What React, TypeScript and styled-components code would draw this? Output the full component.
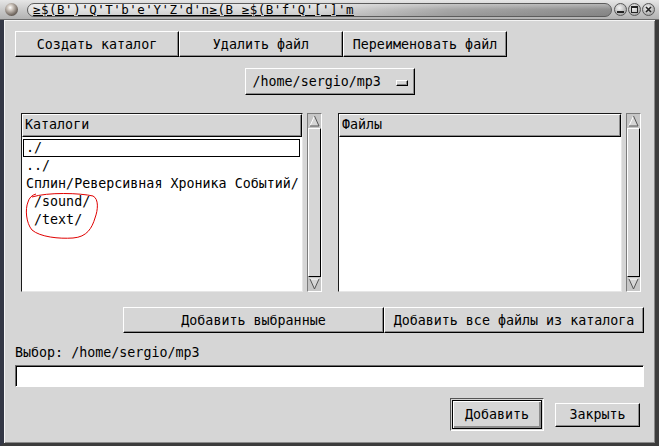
import React from 'react';
import styled, { createGlobalStyle } from 'styled-components';

const MONO = `"DejaVu Sans Mono", "Liberation Mono", monospace`;

const GlobalStyle = createGlobalStyle`
  html, body {
    margin: 0;
    padding: 0;
    background: #d6d6d6;
  }
  body {
    width: 659px;
    height: 446px;
    overflow: hidden;
  }
`;

const Window = styled.div`
  width: 659px;
  height: 446px;
  display: flex;
  flex-direction: column;
  background: #d6d6d6;
  font-family: ${MONO};
  font-size: 13.33px;
  color: #000;
`;

const TitleBar = styled.div`
  height: 20px;
  flex: none;
  box-sizing: border-box;
  display: flex;
  align-items: center;
  padding: 0 4px 0 5px;
  background: linear-gradient(#e6e6e6, #c8c8c8 55%, #b2b2b2);
  border-bottom: 1px solid #6c6c6c;
`;

const Sphere = styled.div`
  width: 13px;
  height: 13px;
  flex: none;
  border-radius: 50%;
  margin-right: 9px;
  background: radial-gradient(circle at 40% 35%, #ffffff 0, #d4ccc4 22%, #7a7068 62%, #2a2622 100%);
`;

const TitlePill = styled.div`
  flex: 1;
  height: 14px;
  box-sizing: border-box;
  border: 1px solid #5c5c5c;
  border-radius: 8px;
  padding-left: 5px;
  display: flex;
  align-items: center;
  background:
    linear-gradient(rgba(255, 255, 255, 0.35), rgba(255, 255, 255, 0) 45%, rgba(0, 0, 0, 0.08)),
    linear-gradient(to right, #e4e4e4 0%, #dadada 50%, #a8a8a8 72%, #8e8e8e 100%);
  overflow: hidden;
`;

const TitleText = styled.span`
  font-size: 12.5px;
  letter-spacing: 0.5px;
  text-decoration: underline;
  white-space: pre;
  line-height: 12px;
`;

const TitleButtons = styled.div`
  display: flex;
  gap: 1px;
  margin-left: 2px;
`;

const TitleBtn = styled.div`
  width: 13px;
  height: 13px;
  box-sizing: border-box;
  border-radius: 50%;
  border: 1px solid #585858;
  background: radial-gradient(circle at 40% 35%, #f4f4f4 0, #bdbdbd 55%, #8a8a8a 100%);
  display: flex;
  align-items: center;
  justify-content: center;
`;

const Frame = styled.div`
  flex: 1;
  display: flex;
  flex-direction: column;
  border-left: 4px solid #343846;
  border-right: 4px solid #3c3c3c;
  border-bottom: 3px solid #3c3c3c;
  box-shadow: inset 1px 1px 0 #f4f4f4, inset -1px -1px 0 #8a8a8a;
  padding: 11px 11px 0 11px;
`;

const Button = styled.button<{ $w: number; $h: number; $default?: boolean }>`
  width: ${(p) => p.$w}px;
  height: ${(p) => p.$h}px;
  flex: none;
  box-sizing: border-box;
  padding: 0;
  margin: 0;
  font-family: ${MONO};
  font-size: 13.33px;
  color: #000;
  background: #d6d6d6;
  border: 1px solid;
  border-color: ${(p) => (p.$default ? '#000' : '#fff #000 #000 #fff')};
  box-shadow: ${(p) =>
    p.$default
      ? 'inset 1px 1px 0 #fff, inset -2px -2px 0 #8c8c8c'
      : 'inset -1px -1px 0 #8c8c8c'};
  text-align: center;
  white-space: pre;
`;

const TopRow = styled.div`
  display: flex;
`;

const OptionMenu = styled.div`
  align-self: center;
  margin-top: 11px;
  width: 170px;
  height: 27px;
  box-sizing: border-box;
  display: flex;
  align-items: center;
  justify-content: space-between;
  padding: 0 6px 0 7px;
  border: 1px solid;
  border-color: #fff #000 #000 #fff;
  box-shadow: inset -1px -1px 0 #8c8c8c;
`;

const Indicator = styled.div`
  width: 12px;
  height: 6px;
  box-sizing: border-box;
  margin-top: 3px;
  border: 1px solid;
  border-color: #fff #000 #000 #fff;
  box-shadow: inset -1px -1px 0 #8c8c8c;
`;

const ListsRow = styled.div`
  margin-top: 18px;
  height: 179px;
  display: flex;
  gap: 16px;
  padding-left: 6px;
`;

const ListGroup = styled.div`
  display: flex;
  gap: 4px;
`;

const Panel = styled.div<{ $w: number }>`
  position: relative;
  width: ${(p) => p.$w}px;
  box-sizing: border-box;
  display: flex;
  flex-direction: column;
  border: 1px solid;
  border-color: #1a1a1a #e6e6e6 #e6e6e6 #1a1a1a;
  background: #fff;
`;

const Header = styled.div`
  height: 23px;
  flex: none;
  box-sizing: border-box;
  padding-left: 2px;
  line-height: 20px;
  background: #d6d6d6;
  border: 1px solid;
  border-color: #fff #000 #000 #fff;
  box-shadow: inset -1px -1px 0 #8c8c8c;
`;

const ListBody = styled.div`
  flex: 1;
  padding-top: 2px;
  background: #fff;
`;

const Row = styled.div<{ $focus?: boolean }>`
  height: 18px;
  box-sizing: border-box;
  margin: 0 2px 0 1px;
  padding-left: 2px;
  line-height: 16px;
  white-space: pre;
  border: 1px solid ${(p) => (p.$focus ? '#000' : 'transparent')};
`;

const Scrollbar = styled.div`
  width: 15px;
  box-sizing: border-box;
  display: flex;
  flex-direction: column;
  border: 1px solid;
  border-color: #7c7c7c #fff #fff #7c7c7c;
  background: #c6c6c6;
`;

const Arrow = styled.div`
  height: 14px;
  flex: none;
  display: flex;
  align-items: center;
  justify-content: center;
`;

const Thumb = styled.div`
  flex: 1;
  border: 1px solid;
  border-color: #fff #000 #000 #fff;
  background: #d6d6d6;
`;

const Annotation = styled.svg`
  position: absolute;
  left: 0;
  top: 0;
  width: 100%;
  height: 100%;
  pointer-events: none;
`;

const AddRow = styled.div`
  margin-top: 15px;
  display: flex;
  justify-content: flex-end;
`;

const Label = styled.div`
  margin-top: 12px;
  height: 16px;
  line-height: 16px;
  white-space: pre;
`;

const Entry = styled.div`
  margin-top: 4px;
  height: 22px;
  box-sizing: border-box;
  background: #fff;
  border: 1px solid;
  border-color: #6c6c6c #fff #fff #6c6c6c;
  box-shadow: inset 1px 1px 0 #000;
`;

const BottomRow = styled.div`
  margin-top: 11px;
  height: 33px;
  display: flex;
  justify-content: flex-end;
  align-items: center;
`;

const DefaultFrame = styled.div`
  width: 94px;
  height: 33px;
  box-sizing: border-box;
  padding: 1px;
  border: 1px solid;
  border-color: #555 #fff #fff #555;
  display: flex;
`;

const Spacer = styled.div<{ $w: number }>`
  width: ${(p) => p.$w}px;
  flex: none;
`;

const ArrowIcon = ({ down }: { down?: boolean }) => (
  <svg width="13" height="14" viewBox="0 0 13 14">
    {down ? (
      <>
        <path d="M2 2 L11 2 L6.5 12 Z" fill="#d6d6d6" />
        <path d="M2 2 L11 2" stroke="#fff" />
        <path d="M2 2 L6.5 12 L11 2" stroke="#555" fill="none" />
      </>
    ) : (
      <>
        <path d="M6.5 2 L11 12 L2 12 Z" fill="#d6d6d6" />
        <path d="M2 12 L6.5 2" stroke="#fff" />
        <path d="M6.5 2 L11 12 L2 12" stroke="#555" fill="none" />
      </>
    )}
  </svg>
);

const ScrollBar = () => (
  <Scrollbar>
    <Arrow>
      <ArrowIcon />
    </Arrow>
    <Thumb />
    <Arrow>
      <ArrowIcon down />
    </Arrow>
  </Scrollbar>
);

const dirs = ['./', '../', 'Сплин/Реверсивная Хроника Событий/', ' /sound/', ' /text/'];

export default function App() {
  return (
    <>
      <GlobalStyle />
      <Window>
        <TitleBar>
          <Sphere />
          <TitlePill>
            <TitleText>{"≥$(B')'Q'T'b'e'Y'Z'd'n≥(B ≥$(B'f'Q'[']'m"}</TitleText>
          </TitlePill>
          <TitleButtons>
            <TitleBtn>
              <svg width="7" height="7" viewBox="0 0 7 7">
                <rect x="0" y="5" width="7" height="2" fill="#222" />
              </svg>
            </TitleBtn>
            <TitleBtn>
              <svg width="7" height="7" viewBox="0 0 7 7">
                <rect x="0.5" y="0.5" width="6" height="6" fill="none" stroke="#222" />
                <rect x="0" y="0" width="7" height="2" fill="#222" />
              </svg>
            </TitleBtn>
            <TitleBtn>
              <svg width="7" height="7" viewBox="0 0 7 7">
                <path d="M1 1 L6 6 M6 1 L1 6" stroke="#222" strokeWidth="1.6" />
              </svg>
            </TitleBtn>
          </TitleButtons>
        </TitleBar>
        <Frame>
          <TopRow>
            <Button $w={164} $h={26}>Создать каталог</Button>
            <Button $w={164} $h={26}>Удалить файл</Button>
            <Button $w={164} $h={26}>Переименовать файл</Button>
          </TopRow>
          <OptionMenu>
            <span>/home/sergio/mp3</span>
            <Indicator />
          </OptionMenu>
          <ListsRow>
            <ListGroup>
              <Panel $w={282}>
                <Header>Каталоги</Header>
                <ListBody>
                  {dirs.map((d, i) => (
                    <Row key={d} $focus={i === 0}>
                      {d}
                    </Row>
                  ))}
                </ListBody>
                <Annotation viewBox="0 0 280 177">
                  <path
                    d="M10 83 C26 78, 58 79, 71 82 C77 85, 76 96, 73 104 C70 114, 65 123, 51 124 C37 125, 18 123, 10 116 C4 109, 3 95, 6 88 C7 84, 10 81, 14 80"
                    fill="none"
                    stroke="#e00000"
                    strokeWidth="1"
                  />
                </Annotation>
              </Panel>
              <ScrollBar />
            </ListGroup>
            <ListGroup>
              <Panel $w={284}>
                <Header>Файлы</Header>
                <ListBody />
              </Panel>
              <ScrollBar />
            </ListGroup>
          </ListsRow>
          <AddRow>
            <Button $w={261} $h={26}>Добавить выбранные</Button>
            <Button $w={260} $h={26}>Добавить все файлы из каталога</Button>
          </AddRow>
          <Label>Выбор: /home/sergio/mp3</Label>
          <Entry />
          <BottomRow>
            <DefaultFrame>
              <Button $w={90} $h={29} $default>
                Добавить
              </Button>
            </DefaultFrame>
            <Spacer $w={11} />
            <Button $w={85} $h={24}>Закрыть</Button>
            <Spacer $w={4} />
          </BottomRow>
        </Frame>
      </Window>
    </>
  );
}
